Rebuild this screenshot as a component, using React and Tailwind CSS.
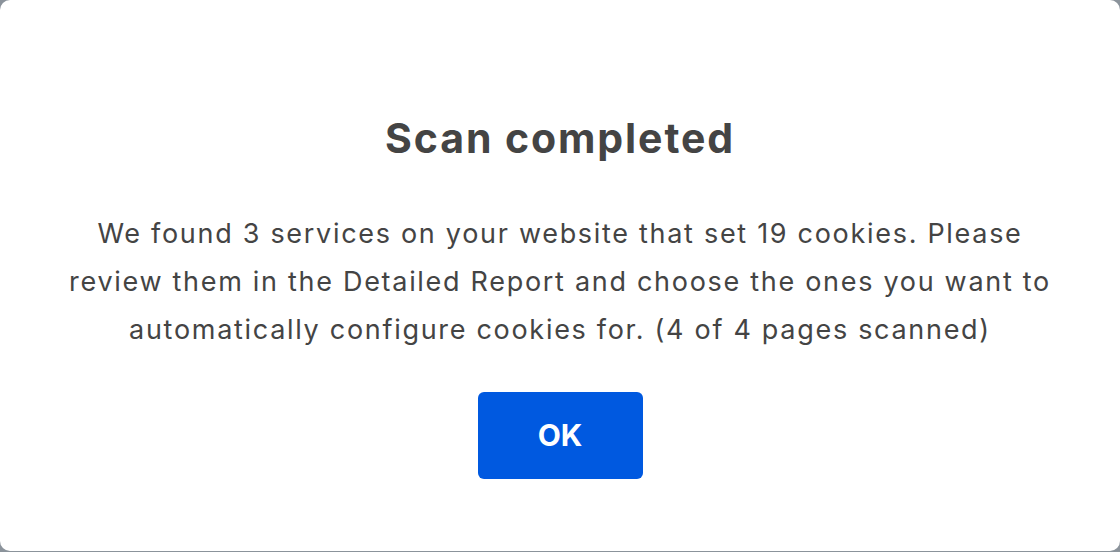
import React from 'react';

export default function App() {
  return (
    <div className="h-[552px] w-[1120px] overflow-hidden bg-[#8b939b]" style={{ fontFamily: 'Inter, "Noto Sans", sans-serif' }}>
      {/* Dialog card */}
      <div className="flex h-[551px] flex-col items-center rounded-[10px] bg-white pt-[110px] text-[#444444]">
        <h1 className="text-[41px] font-bold leading-[56px] tracking-[1.9px]">Scan completed</h1>
        <p className="mt-[44px] whitespace-nowrap text-center text-[27px] leading-[48px] tracking-[1.7px]">
          We found 3 services on your website that set 19 cookies. Please
          <br />
          review them in the Detailed Report and choose the ones you want to
          <br />
          automatically configure cookies for. (4 of 4 pages scanned)
        </p>
        <button className="mt-[38px] h-[87px] w-[165px] rounded-[6px] bg-[#0059e0] text-[30px] font-bold text-white">
          OK
        </button>
      </div>
    </div>
  );
}
